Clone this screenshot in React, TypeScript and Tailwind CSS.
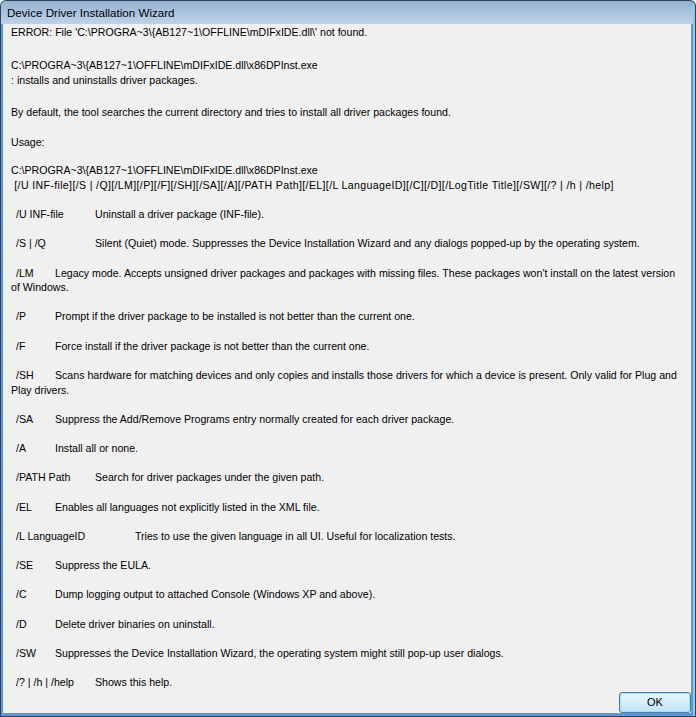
import React, { FC, ReactNode } from "react";

const Line: FC<{ children?: ReactNode; className?: string }> = ({ children, className = "" }) => (
  <div className={`h-[14.625px] whitespace-pre ${className}`}>{children ?? " "}</div>
);

// one help entry: switch, then the description at a tab stop
const Opt: FC<{ sw: string; w: string; children: ReactNode }> = ({ sw, w, children }) => (
  <div className="h-[14.625px] whitespace-pre">
    <span className={`inline-block ml-[5px] ${w}`}>{sw}</span>
    {children}
  </div>
);

const path = "C:\\PROGRA~3\\{AB127~1\\OFFLINE\\mDIFxIDE.dll\\x86DPInst.exe";

export default function App() {
  return (
    <div className="w-[696px] h-[717px] rounded-t-[6px] bg-[#2f4259] p-px flex overflow-hidden">
      <div className="flex-1 min-w-0 flex flex-col rounded-t-[5px] bg-[#5b98d4] border-r-[2px] border-[#7fd0f0]">
        <div
          className="h-[23px] flex items-center pl-[6px] rounded-t-[5px] bg-gradient-to-b from-[#97b2d0] to-[#bed3ea] text-black text-[11.6px]"
          style={{ fontFamily: '"Liberation Sans", Arial, sans-serif' }}
        >
          Device Driver Installation Wizard
        </div>
        <div
          className="flex-1 min-w-0 overflow-hidden flex flex-col ml-[2px] mr-[2px] mb-[3px] bg-[#f0f0f0] text-black text-[10.6px] leading-[14.625px]"
          style={{ fontFamily: '"Liberation Sans", Arial, sans-serif' }}
        >
          <div className="pl-[8px] pt-[0.5px]">
            <Line>ERROR: File 'C:\PROGRA~3\{"{"}AB127~1\OFFLINE\mDIFxIDE.dll\' not found.</Line>
            <Line />
            <div className="mt-[4px]">
              <Line>{path}</Line>
              <Line className="mt-[1px]">: installs and uninstalls driver packages.</Line>
              <Line />
              <Line className="mt-[2px]">By default, the tool searches the current directory and tries to install all driver packages found.</Line>
              <Line />
              <Line className="mt-[1.5px]">Usage:</Line>
              <Line />
              <Line className="-mt-[1.5px]">{path}</Line>
              <Line className="tracking-[0.35px]">
                {" [/U INF-file][/S | /Q][/LM][/P][/F][/SH][/SA][/A][/PATH Path][/EL][/L LanguageID][/C][/D][/LogTitle Title][/SW][/? | /h | /help]"}
              </Line>
              <Line />
              <Opt sw="/U INF-file" w="w-[79px]">Uninstall a driver package (INF-file).</Opt>
              <Line />
              <Opt sw="/S | /Q" w="w-[79px]">
                Silent (Quiet) mode. Suppresses the Device Installation Wizard and any dialogs popped-up by the operating system.
              </Opt>
              <Line />
              <Opt sw="/LM" w="w-[39px]">
                Legacy mode. Accepts unsigned driver packages and packages with missing files. These packages won't install on the latest version
              </Opt>
              <Line>of Windows.</Line>
              <Line />
              <Opt sw="/P" w="w-[39px]">Prompt if the driver package to be installed is not better than the current one.</Opt>
              <Line />
              <Opt sw="/F" w="w-[39px]">Force install if the driver package is not better than the current one.</Opt>
              <Line />
              <Opt sw="/SH" w="w-[39px]">
                Scans hardware for matching devices and only copies and installs those drivers for which a device is present. Only valid for Plug and
              </Opt>
              <Line>Play drivers.</Line>
              <Line />
              <Opt sw="/SA" w="w-[39px]">Suppress the Add/Remove Programs entry normally created for each driver package.</Opt>
              <Line />
              <Opt sw="/A" w="w-[39px]">Install all or none.</Opt>
              <Line />
              <Opt sw="/PATH Path" w="w-[79px]">Search for driver packages under the given path.</Opt>
              <Line />
              <Opt sw="/EL" w="w-[39px]">Enables all languages not explicitly listed in the XML file.</Opt>
              <Line />
              <Opt sw="/L LanguageID" w="w-[119px]">Tries to use the given language in all UI. Useful for localization tests.</Opt>
              <Line />
              <Opt sw="/SE" w="w-[39px]">Suppress the EULA.</Opt>
              <Line />
              <Opt sw="/C" w="w-[39px]">Dump logging output to attached Console (Windows XP and above).</Opt>
              <Line />
              <Opt sw="/D" w="w-[39px]">Delete driver binaries on uninstall.</Opt>
              <Line />
              <Opt sw="/SW" w="w-[39px]">
                Suppresses the Device Installation Wizard, the operating system might still pop-up user dialogs.
              </Opt>
              <Line />
              <Opt sw="/? | /h | /help" w="w-[79px]">Shows this help.</Opt>
            </div>
          </div>
          <div className="flex-1" />
          <div className="flex justify-end">
            <button className="w-[72px] h-[21px] rounded-[3px] border border-[#3c7fb1] bg-gradient-to-b from-[#eaf6fd] to-[#bfe4f8] shadow-[inset_0_0_0_1px_#a6e0f7] text-[11px] text-black leading-none">
              OK
            </button>
          </div>
        </div>
      </div>
    </div>
  );
}
